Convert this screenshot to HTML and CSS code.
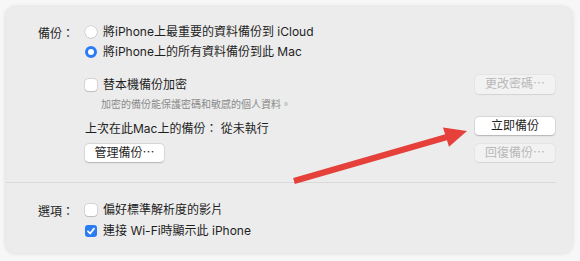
FILE: index.html
```html
<!DOCTYPE html>
<html lang="zh-Hant">
<head>
    <meta charset="UTF-8">
    <meta name="viewport" content="width=device-width, initial-scale=1.0">
    <title>備份</title>
    <link rel="stylesheet" href="styles.css">
</head>
<body>

    <div class="panel">
        <div class="group backup">
            <div class="row">
                <div class="label">備份：</div>
                <div class="body"><span class="radio"></span>將iPhone上最重要的資料備份到 iCloud</div>
            </div>
            <div class="row">
                <div class="label"></div>
                <div class="body"><span class="radio on"></span>將iPhone上的所有資料備份到此 Mac</div>
            </div>
            <div class="row encrypt">
                <div class="label"></div>
                <div class="body"><span class="check"></span>替本機備份加密</div>
                <div class="action"><span class="btn off">更改密碼⋯</span></div>
            </div>
            <div class="row note">
                <div class="label"></div>
                <div class="body">加密的備份能保護密碼和敏感的個人資料。</div>
            </div>
            <div class="row last">
                <div class="label"></div>
                <div class="body">上次在此Mac上的備份： 從未執行</div>
                <div class="action"><span class="btn">立即備份</span></div>
            </div>
            <div class="row manage">
                <div class="label"></div>
                <div class="body"><span class="btn">管理備份⋯</span></div>
                <div class="action"><span class="btn off">回復備份⋯</span></div>
            </div>
        </div>

        <div class="group options">
            <div class="row">
                <div class="label">選項：</div>
                <div class="body"><span class="check"></span>偏好標準解析度的影片</div>
            </div>
            <div class="row second">
                <div class="label"></div>
                <div class="body">
                    <span class="check on">
                        <svg width="12" height="12" viewBox="0 0 12 12"><path d="M3 6.3 L5.1 8.5 L9 3.6" fill="none" stroke="#fff" stroke-width="1.8" stroke-linecap="round" stroke-linejoin="round"/></svg>
                    </span>連接 Wi-Fi時顯示此 iPhone
                </div>
            </div>
        </div>
    </div>

    <!-- 標註箭頭 -->
    <svg class="arrow" width="580" height="261" viewBox="0 0 580 261">
        <line x1="294" y1="181" x2="447" y2="137" stroke="#e5403a" stroke-width="6"/>
        <polygon points="467,131 443,127.5 449,146.7" fill="#e5403a"/>
    </svg>

</body>
</html>
```

FILE: styles.css
```css
body {
    margin: 0;
    width: 580px;
    height: 261px;
    overflow: hidden;
    background-color: #f7f7f7;
    font-family: Inter, "Noto Sans CJK TC", sans-serif;
    font-size: 12px;
    color: #1e1e1e;
}
.panel {
    margin: 7px 0 0 6px;
    width: 566px;
    height: 246px;
    background: #ececec;
    border-radius: 9px;
    box-shadow: 0 0 5px rgba(0, 0, 0, 0.14);
}
.group {
    display: flex;
    flex-direction: column;
}
.backup {
    padding-top: 15px;
    padding-bottom: 20px;
    border-bottom: 1px solid #d9d9d9;
    margin-right: 16px;
}
.options {
    padding-top: 17px;
}
.row {
    display: flex;
    align-items: center;
    height: 20px;
}
.label {
    width: 68px;
    margin-right: 11px;
    text-align: right;
    flex-shrink: 0;
}
.body {
    flex: 1;
    display: flex;
    align-items: center;
    line-height: 16px;
    white-space: pre;
}
.action {
    width: 80px;
    margin-right: 1px;
}
.encrypt {
    margin-top: 13px;
    height: 19px;
}
.note {
    margin-top: 1px;
    height: 16px;
}
.note .body {
    padding-left: 16px;
    padding-top: 2px;
    font-size: 10px;
    color: #8a8a8a;
}
.last {
    margin-top: 6px;
    height: 18px;
}
.last .body {
    padding-top: 6px;
}
.manage {
    margin-top: 9px;
    height: 18px;
}
.second {
    margin-top: 1px;
}
.second .body {
    white-space: normal;
}
/* 單選與核取框 */
.radio {
    width: 12px;
    height: 12px;
    border-radius: 50%;
    background: #fff;
    box-shadow: 0 0 0 0.5px rgba(0, 0, 0, 0.18), 0 0.5px 1px rgba(0, 0, 0, 0.12);
    margin-right: 6px;
    box-sizing: border-box;
}
.radio.on {
    background: #fff;
    border: 3.5px solid #2a7cf5;
    box-shadow: none;
}
.check {
    width: 12px;
    height: 12px;
    border-radius: 3px;
    background: #fff;
    box-shadow: 0 0 0 0.5px rgba(0, 0, 0, 0.18), 0 0.5px 1px rgba(0, 0, 0, 0.12);
    margin-right: 6px;
    display: flex;
}
.check.on {
    background: #2a7cf5;
    box-shadow: none;
}
/* 按鈕 */
.btn {
    display: inline-block;
    width: 80px;
    height: 18px;
    line-height: 18px;
    text-align: center;
    background: #fff;
    border-radius: 4px;
    box-shadow: 0 0 0 0.5px rgba(0, 0, 0, 0.1), 0 0.5px 1.5px rgba(0, 0, 0, 0.2);
    color: #1f1f1f;
}
.manage .body .btn {
    width: 79px;
}
.btn.off {
    background: #f2f2f2;
    color: #b9b9b9;
    box-shadow: 0 0 0 0.5px rgba(0, 0, 0, 0.05), 0 0.5px 1px rgba(0, 0, 0, 0.08);
}
.encrypt .btn.off {
    height: 19px;
}
.arrow {
    position: absolute;
    top: 0;
    left: 0;
}
```
